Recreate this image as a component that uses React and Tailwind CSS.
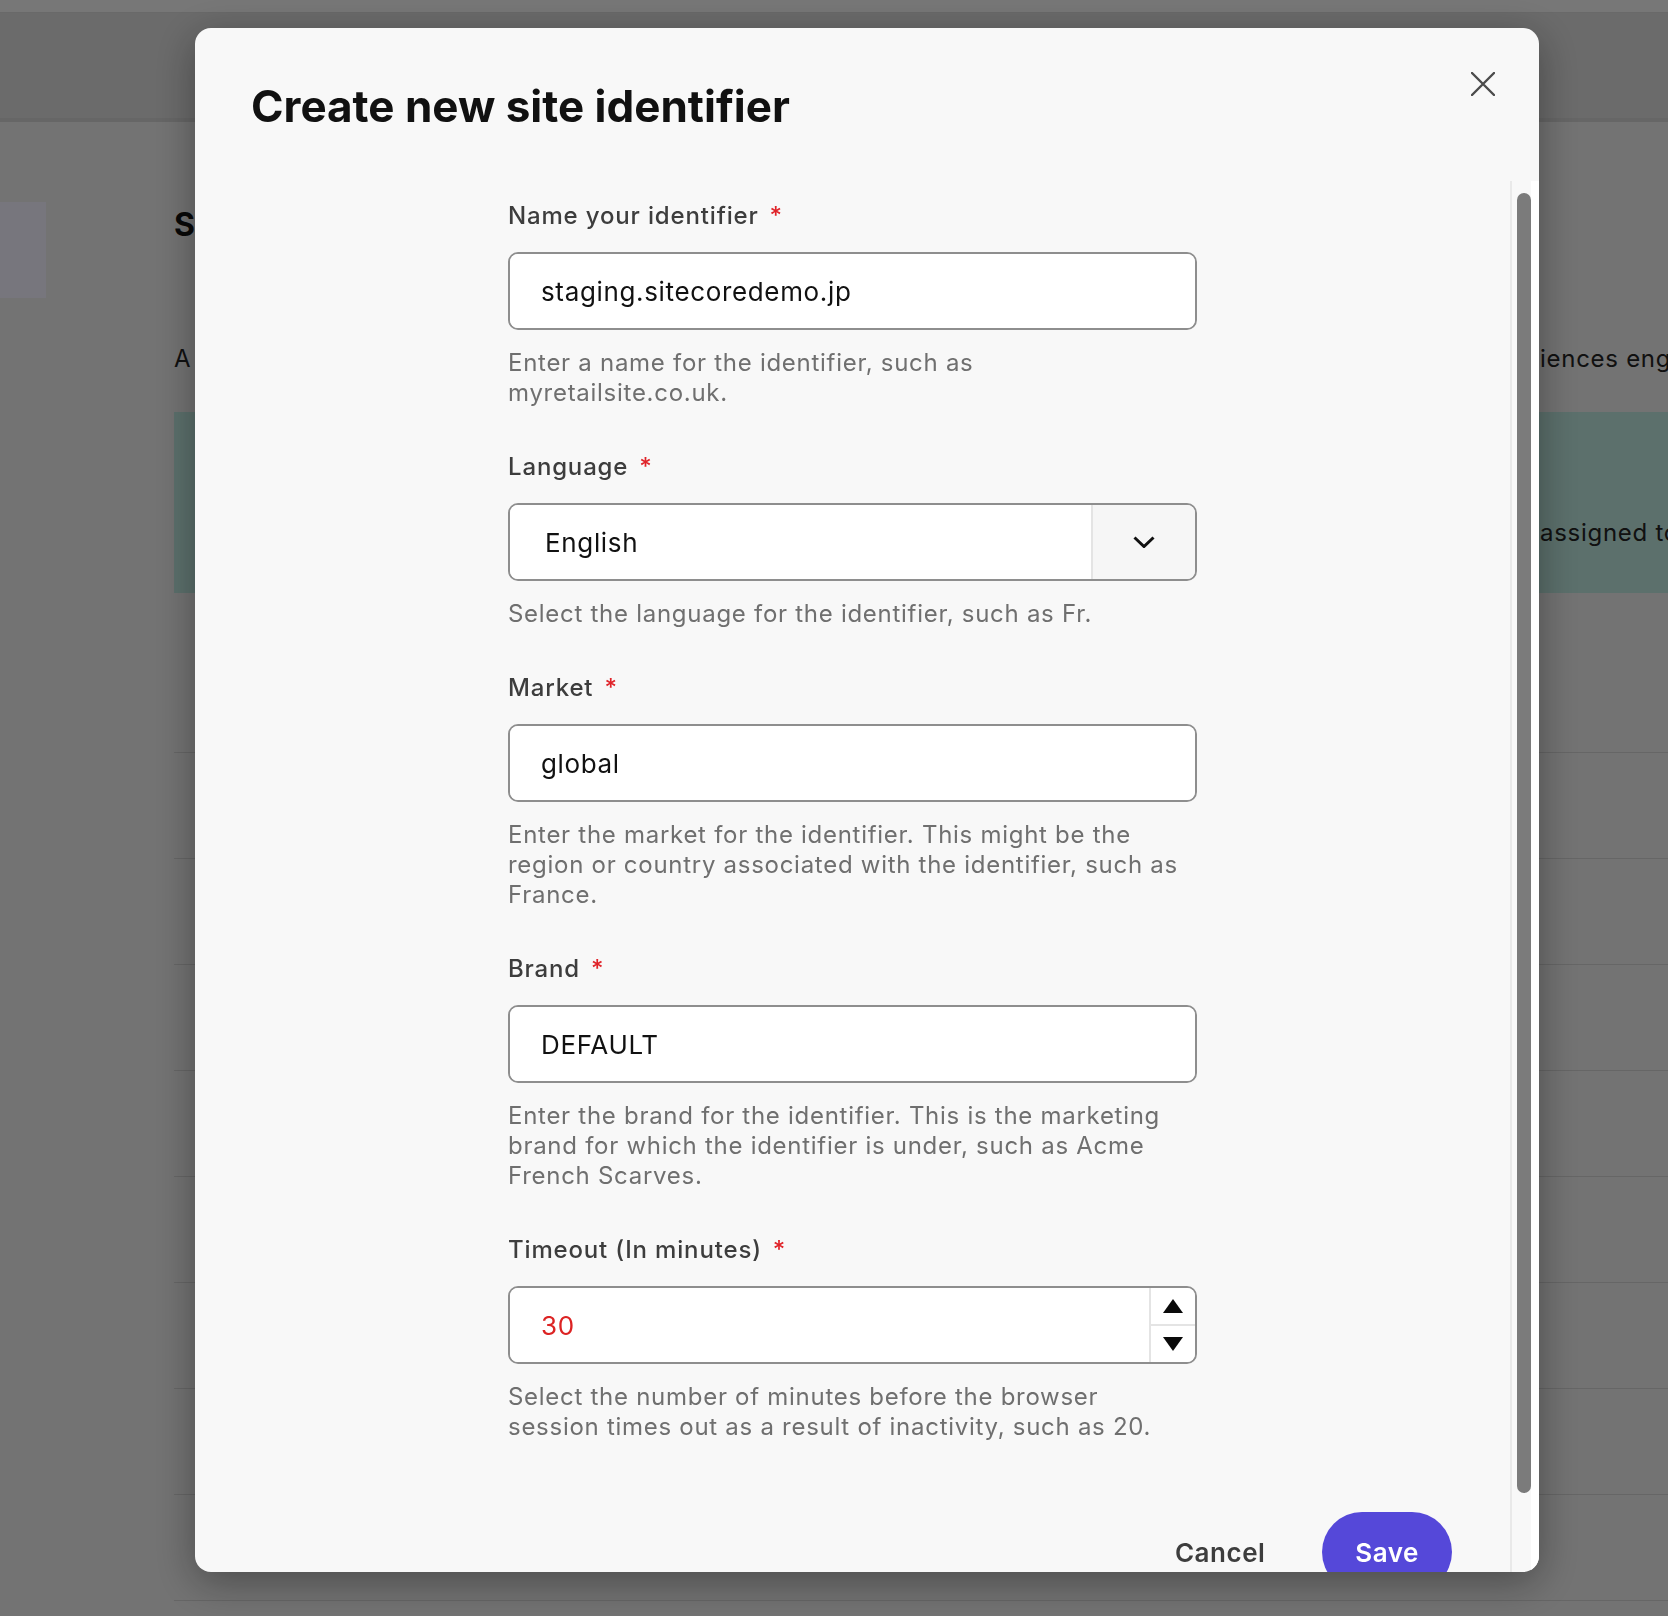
import React from 'react';

const fields = [
  {
    label: 'Name your identifier',
    value: 'staging.sitecoredemo.jp',
    help: ['Enter a name for the identifier, such as', 'myretailsite.co.uk.'],
  },
  {
    label: 'Language',
    value: 'English',
    type: 'select',
    help: ['Select the language for the identifier, such as Fr.'],
  },
  {
    label: 'Market',
    value: 'global',
    help: [
      'Enter the market for the identifier. This might be the',
      'region or country associated with the identifier, such as',
      'France.',
    ],
  },
  {
    label: 'Brand',
    value: 'DEFAULT',
    help: [
      'Enter the brand for the identifier. This is the marketing',
      'brand for which the identifier is under, such as Acme',
      'French Scarves.',
    ],
  },
  {
    label: 'Timeout (In minutes)',
    value: '30',
    type: 'number',
    help: [
      'Select the number of minutes before the browser',
      'session times out as a result of inactivity, such as 20.',
    ],
  },
];

function CloseIcon() {
  return (
    <svg width="24" height="24" viewBox="0 0 24 24" fill="none">
      <path d="M1 1L23 23M23 1L1 23" stroke="#4b4b4b" strokeWidth="2.4" strokeLinecap="round" />
    </svg>
  );
}

function Chevron() {
  return (
    <svg width="22" height="12" viewBox="0 0 22 12" fill="none">
      <path d="M1.5 1.5L11 10.5L20.5 1.5" stroke="#111" strokeWidth="3" />
    </svg>
  );
}

function Field({ field }) {
  const { label, value, type, help } = field;
  return (
    <div className="mb-[43px]">
      <label className="block text-[24px] leading-[32px] font-medium tracking-[0.035em] text-[#3d3d3d]">
        {label}
        <span className="ml-[11px] text-[#e0242a]">*</span>
      </label>

      <div className="mt-[20px] flex h-[78px] overflow-hidden rounded-[10px] border-2 border-[#8e8e8e] bg-white">
        <input
          readOnly
          value={value}
          className={
            'min-w-0 flex-1 bg-white text-[26px] tracking-[0.025em] outline-none ' +
            (type === 'number' ? 'pl-[31px] text-[#dc2323]' : type === 'select' ? 'pl-[35px] text-[#111]' : 'pl-[31px] text-[#111]')
          }
        />
        {type === 'select' && (
          <div className="flex w-[104px] items-center justify-center border-l-2 border-[#e4e4e4] bg-[#f6f6f6]">
            <Chevron />
          </div>
        )}
        {type === 'number' && (
          <div className="flex w-[46px] flex-col border-l-2 border-[#e4e4e4] bg-white">
            <button className="flex flex-1 items-center justify-center border-b-2 border-[#e4e4e4]">
              <svg width="20" height="14" viewBox="0 0 20 14">
                <path d="M10 0L20 14H0Z" fill="#0a0a0a" />
              </svg>
            </button>
            <button className="flex flex-1 items-center justify-center">
              <svg width="20" height="14" viewBox="0 0 20 14">
                <path d="M0 0H20L10 14Z" fill="#0a0a0a" />
              </svg>
            </button>
          </div>
        )}
      </div>

      <p className="mt-[18px] text-[24px] leading-[30px] tracking-[0.03em] text-[#6f6f6f]">
        {help.map((line, i) => (
          <React.Fragment key={i}>
            {i > 0 && <br />}
            {line}
          </React.Fragment>
        ))}
      </p>
    </div>
  );
}

export default function App() {
  const rows = [0, 1, 2, 3, 4, 5, 6, 7, 8];

  return (
    <div className="relative h-screen overflow-hidden bg-[#e6e6e6] font-['Inter',sans-serif] text-[#222]">
      {/* page behind the dialog */}
      <div className="h-[13px] border-b border-[#d2d2d2] bg-[#eeeeee]" />
      <div className="h-[109px] border-b-4 border-[#cccccc] bg-[#d6d6d6]" />

      <div className="flex">
        <aside className="w-[174px] shrink-0">
          <div className="mt-[80px] h-[96px] w-[46px] bg-[#eeecfa]" />
        </aside>

        <main className="min-w-0 flex-1">
          <h1 className="pt-[83px] text-[32px] leading-[40px] font-bold text-[#111]">Sites</h1>

          <div className="mt-[98px] flex text-[24px] leading-[32px] tracking-[0.03em] whitespace-nowrap">
            <span className="w-[1366px] shrink-0 overflow-hidden">A site</span>
            <span>iences engine.</span>
          </div>

          <div className="mt-[37px] flex h-[181px] bg-[#b8e0d8] pt-[105px] text-[24px] leading-[32px] tracking-[0.03em] whitespace-nowrap">
            <span className="w-[1366px] shrink-0" />
            <span>assigned to a site.</span>
          </div>

          <div className="h-[160px] border-b border-[#cccccc]" />
          {rows.map((r) => (
            <div key={r} className="h-[106px] border-b border-[#cccccc]" />
          ))}
        </main>
      </div>

      {/* dialog */}
      <div className="fixed inset-0 bg-black/50 pl-[195px] pt-[28px]">
        <div className="flex h-[1544px] w-[1344px] flex-col overflow-hidden rounded-[16px] bg-[#f8f8f8] shadow-[0_10px_40px_rgba(0,0,0,0.35)]">
          <div className="flex h-[153px] shrink-0 items-start justify-between pl-[56px] pr-[44px]">
            <h2 className="pt-[52px] text-[44px] leading-[53px] font-bold text-[#111]">
              Create new site identifier
            </h2>
            <button className="mt-[44px]" aria-label="Close">
              <CloseIcon />
            </button>
          </div>

          <div className="flex min-h-0 flex-1">
            <div className="min-w-0 flex-1 overflow-hidden pt-[19px]">
              <form className="mx-auto w-[689px]">
                {fields.map((f) => (
                  <Field key={f.label} field={f} />
                ))}
              </form>

              <div className="mt-[70px] flex justify-end gap-[24px] pr-[58px]">
                <button className="h-[80px] px-[33px] text-[26px] font-semibold tracking-[0.02em] text-[#3d3d3d]">
                  Cancel
                </button>
                <button className="h-[80px] rounded-full bg-[#5548d9] px-[33px] text-[26px] font-semibold tracking-[0.02em] text-white">
                  Save
                </button>
              </div>
            </div>

            <div className="flex w-[29px] shrink-0 border-l-2 border-[#e9e9e9]">
              <div className="ml-[5px] mt-[12px] h-[1300px] w-[14px] rounded-full bg-[#7b7b7b]" />
              <div className="flex-1 bg-white" />
            </div>
          </div>
        </div>
      </div>
    </div>
  );
}
